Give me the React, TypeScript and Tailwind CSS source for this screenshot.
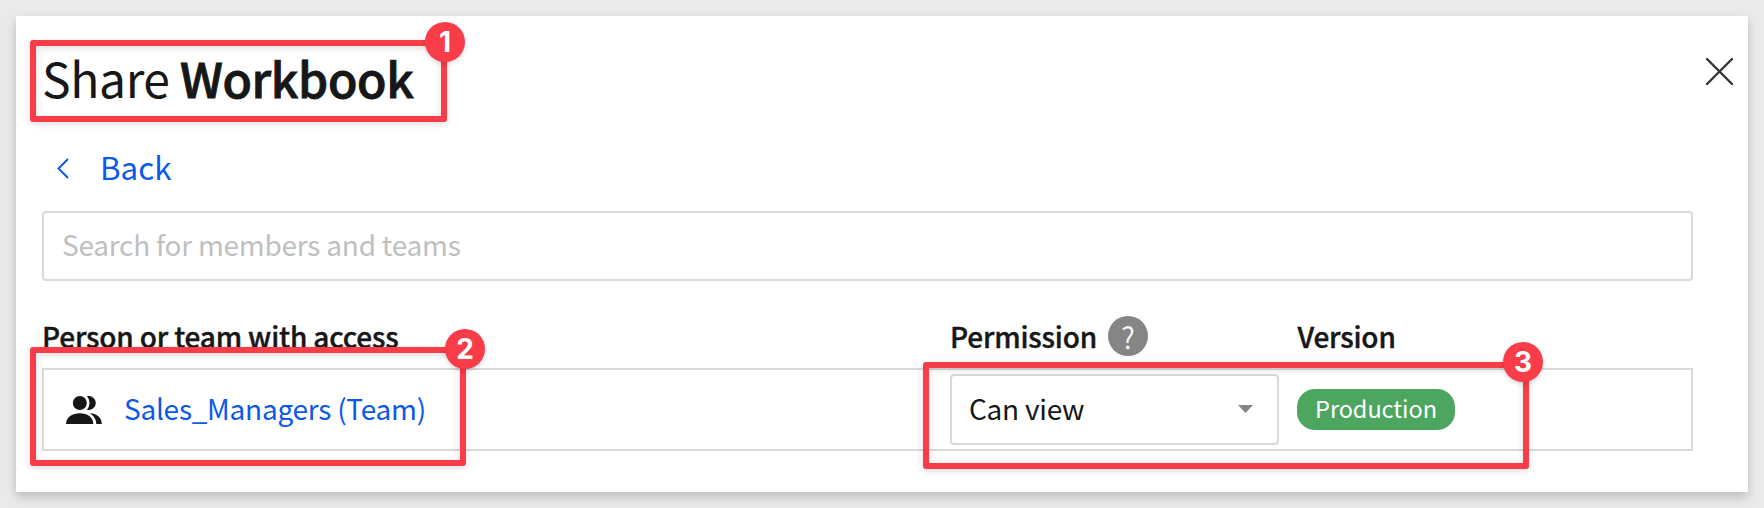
type FrameProps = { frame: string; badge: string; label: string };

function Callout({ frame, badge, label }: FrameProps) {
  return (
    <>
      <div className={`pointer-events-none absolute rounded-[3px] border-6 border-[#f83c48] drop-shadow-[0_2px_3px_rgba(0,0,0,0.14)] ${frame}`} />
      <div className={`absolute flex size-10 items-center justify-center rounded-full bg-[#f83c48] font-['Inter',sans-serif] text-[28px] leading-none font-bold text-white shadow-[0_2px_4px_rgba(0,0,0,0.15)] ${badge}`}>
        {label}
      </div>
    </>
  );
}

function TeamIcon() {
  return (
    <svg width="36" height="28" viewBox="0 0 36 28" fill="#171717" aria-hidden="true">
      <circle cx="13.8" cy="7" r="7" />
      <path d="M20.8 0.3A7 7 0 1 1 20.8 13.7C24.300 10.5 24.300 3.500 20.8 0.3Z" />
      <path d="M0 28C0 21 6.500 17.200 13.800 17.200S27.300 21 27.300 28Z" />
      <path d="M23.800 17.300C30.500 17.300 35.800 21.500 35.800 28H30.300C30.300 23.200 27.500 19.500 23.800 17.300Z" />
    </svg>
  );
}

export default function App() {
  return (
    <div className="relative h-[508px] w-[1764px] overflow-hidden bg-[#eaeaea] p-4 font-['Noto_Sans_CJK_SC',sans-serif] text-[#171717]">
      <section className="flex h-[476px] flex-col bg-white pr-[55px] pl-[26px] shadow-[0_5px_10px_rgba(0,0,0,0.2)]">
        <header className="mt-[31px] -mr-10 flex h-[60px] items-center justify-between">
          <h1 className="text-[48px] leading-[60px] tracking-[-0.38px] whitespace-pre">
            Share <span className="font-medium [-webkit-text-stroke:0.9px_#171717]">Workbook</span>
          </h1>
          <button aria-label="Close" className="-mt-3">
            <svg width="28" height="28" viewBox="0 0 28 28" fill="none" stroke="#333" strokeWidth="2.4" strokeLinecap="round">
              <path d="M2 2L27 27M27 2L2 27" />
            </svg>
          </button>
        </header>

        <button className="mt-10 flex h-10 items-center self-start pl-[15px] text-[31.3px] leading-10 text-[#0b59ea]">
          <svg className="mt-0.5" width="12" height="21" viewBox="0 0 12 21" fill="none" stroke="currentColor" strokeWidth="2">
            <path d="M11 1L1.500 10.500L11 20" />
          </svg>
          <span className="ml-[31px]">Back</span>
        </button>

        <div className="mt-6 flex h-[70px] items-center rounded-[4px] border-2 border-[#d9d9d9] pb-1 pl-[18px] text-[28px] tracking-[-0.24px] text-[#bfbfbf]">
          Search for members and teams
        </div>

        <div className="mt-[35px] flex h-10 items-center text-[28px] leading-10 font-medium tracking-[-0.18px] [-webkit-text-stroke:0.4px_#171717]">
          <div className="w-[908px]">Person or team with access</div>
          <div className="flex w-[347.500px] items-center">
            Permission
            <span className="ml-[11px] flex size-10 items-center justify-center rounded-full bg-[#858585] text-[29px] leading-9 font-light text-white [-webkit-text-stroke:0.4px_#fff]">?</span>
          </div>
          <div>Version</div>
        </div>

        <div className="mt-3 flex h-[83px] items-center border-2 border-[#d9d9d9] text-[28px] leading-10 tracking-[-0.26px]">
          <div className="flex w-[906px] items-center pl-[22px]">
            <TeamIcon />
            <span className="ml-[22px] -mt-[3px] text-[#0b59ea]">Sales_Managers (Team)</span>
          </div>
          <div className="flex h-[71px] w-[329px] items-center justify-between rounded-[4px] border-2 border-[#d9d9d9] pr-6 pl-[17px]">
            <span className="-mt-[3px]">Can view</span>
            <svg className="-mt-0.5" width="15" height="8" viewBox="0 0 15 8" fill="#858585">
              <path d="M0 0H15L7.500 8Z" />
            </svg>
          </div>
          <span className="ml-[18px] flex h-[41px] w-[158px] items-center justify-center rounded-[18px] bg-[#4ca65f] pb-[3px] text-[23.5px] tracking-[-0.06px] text-white">
            Production
          </span>
        </div>
      </section>

      <Callout frame="left-[30px] top-[39.500px] h-[82px] w-[417px]" badge="left-[425px] top-[22.400px]" label="1" />
      <Callout frame="left-[30px] top-[347px] h-[118.500px] w-[436px]" badge="left-[445px] top-[329px]" label="2" />
      <Callout frame="left-[922.500px] top-[361.500px] h-[107px] w-[606px]" badge="left-[1503px] top-[342.400px]" label="3" />
    </div>
  );
}
